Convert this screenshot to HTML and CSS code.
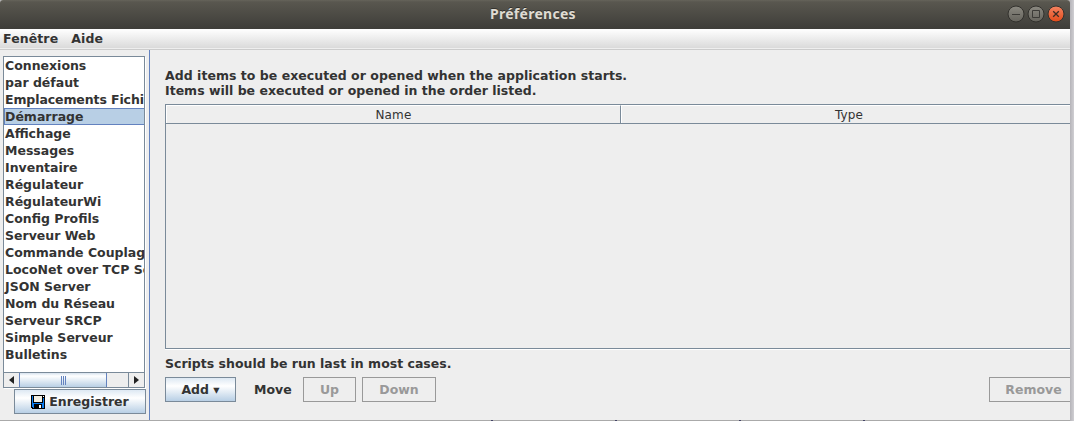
FILE: index.html
```html
<!DOCTYPE html>
<html lang="fr">
<head>
<meta charset="utf-8">
<title>Préférences</title>
<link rel="stylesheet" href="styles.css">
</head>
<body>
<div class="window">
  <header class="titlebar">
    <span class="title">Préférences</span>
    <div class="controls">
      <svg width="60" height="20" viewBox="0 0 60 20">
        <defs>
          <linearGradient id="grey" x1="0" y1="0" x2="0" y2="1"><stop offset="0" stop-color="#8b8981"/><stop offset="1" stop-color="#65635c"/></linearGradient>
          <linearGradient id="orange" x1="0" y1="0" x2="0" y2="1"><stop offset="0" stop-color="#f58462"/><stop offset="1" stop-color="#e14a19"/></linearGradient>
        </defs>
        <circle cx="10" cy="10" r="8" fill="url(#grey)" stroke="#32312d"/>
        <path d="M6 10.5h8" stroke="#3c3b37"/>
        <circle cx="30" cy="10" r="8" fill="url(#grey)" stroke="#32312d"/>
        <path d="M26.5 6.5h7v7h-7z" fill="none" stroke="#3c3b37"/>
        <circle cx="50" cy="10" r="8" fill="url(#orange)" stroke="#32312d"/>
        <path d="M47.2 7.2l5.6 5.6M52.8 7.2l-5.6 5.6" stroke="#3c2c24" stroke-width="1.3"/>
      </svg>
    </div>
  </header>
  <nav class="menubar"><span class="menu">Fenêtre</span><span class="menu">Aide</span></nav>
  <div class="body">
    <aside class="side">
      <div class="list">
        <ul class="items">
          <li>Connexions</li><li>par défaut</li><li class="tight">Emplacements Fichi</li><li class="selected">Démarrage</li><li>Affichage</li><li>Messages</li><li>Inventaire</li><li>Régulateur</li><li>RégulateurWi</li><li>Config Profils</li><li>Serveur Web</li><li>Commande Couplag</li><li>LocoNet over TCP Se</li><li>JSON Server</li><li>Nom du Réseau</li><li>Serveur SRCP</li><li>Simple Serveur</li><li>Bulletins</li>
        </ul>
        <div class="scrollbar">
          <svg class="arrow" width="15" height="14"><path d="M10 3v8L5 7z" fill="#222"/></svg>
          <div class="thumb"><i></i><i></i><i></i></div>
          <div class="track"></div>
          <svg class="arrow right" width="16" height="14"><path d="M5 3v8l5-4z" fill="#222"/></svg>
        </div>
      </div>
      <div class="button save">
        <svg width="14" height="14" viewBox="0 0 14 14" shape-rendering="crispEdges"><path d="M0 0h14v14H1L0 13z" fill="#000"/><path d="M1 1h1v7h10V3h1v10h-2V9H3v4H2l-1-1z" fill="#0a7cf0"/><path d="M3 1h8v6H3z" fill="#f1eee2"/><path d="M12 1h1v1h-1zM8 10h2v3H8z" fill="#fff"/></svg>
        <span>Enregistrer</span>
      </div>
    </aside>
    <main class="content">
      <p class="intro">Add items to be executed or opened when the application starts.</p>
      <p>Items will be executed or opened in the order listed.</p>
      <div class="table"><div class="thead"><div class="th name">Name</div><div class="th type">Type</div></div></div>
      <p class="hint">Scripts should be run last in most cases.</p>
      <div class="actions">
        <div class="button add"><span>Add ▾</span></div>
        <span class="move">Move</span>
        <div class="button disabled up"><span>Up</span></div>
        <div class="button disabled down"><span>Down</span></div>
        <div class="button disabled remove"><span>Remove</span></div>
      </div>
    </main>
  </div>
  <footer class="edge"><i></i><i></i><i></i><i></i></footer>
</div>
</body>
</html>
```
FILE: styles.css
```css
* { box-sizing: border-box; }
body { margin: 0; width: 1074px; height: 421px; overflow: hidden; background: linear-gradient(90deg, #b5b4b9 1070px, #d0cfd3 1074px); font: bold 12.5px/15px "DejaVu Sans", sans-serif; color: #333; }
.window { width: 1070px; height: 421px; display: flex; flex-direction: column; background: #eee; overflow: hidden; border-radius: 3px 3px 0 0; }
.titlebar { height: 29px; flex: none; display: grid; grid-template-columns: 490px 1fr 64px; background: linear-gradient(#66645a, #59574f 2px, #3e3d39); color: #dfdbd2; }
.title { grid-column: 2; font: bold 14px/28px "Noto Sans", sans-serif; letter-spacing: .27px; white-space: nowrap; text-shadow: 0 -1px #33322e; }
.controls { padding-top: 4px; height: 29px; }
.controls svg { display: block; }
.menubar { height: 21px; flex: none; display: flex; gap: 13px; padding: 2px 3px 0; letter-spacing: .1px; background: linear-gradient(#fff, #dadada 19px, #eee 19px, #eee 20px, #ccc 20px); }
.body { display: flex; height: 370px; flex: none; }
.side { width: 150px; flex: none; border-right: 1px solid #6382bf; padding: 6px 3px 0 3px; }
.list { width: 142px; height: 332px; border: 1px solid #7a8a99; background: #fff; box-shadow: 1px 1px #fff; overflow: hidden; }
.items { list-style: none; margin: 0; padding: 0; height: 315px; overflow: hidden; }
.items li { height: 17px; line-height: 17px; padding-left: 1px; white-space: nowrap; overflow: hidden; }
.items .tight { letter-spacing: -.1px; }
.items .selected { background: #b8cfe5; border: 1px solid #6382bf; border-width: 1px 0 1px 1px; padding-left: 0; line-height: 15px; }
.scrollbar { display: flex; height: 15px; border-top: 1px solid #7a8a99; background: #eee; }
.arrow { display: block; flex: none; }
.right { width: 16px; border-left: 1px solid #7a8a99; }
.thumb { width: 88px; border: 1px solid #6382bf; border-width: 0 1px; background: linear-gradient(#d6e2ee, #fff 3px, #b8cfe5); display: flex; justify-content: center; gap: 1px; padding-top: 3px; }
.thumb i { width: 1px; height: 9px; background: #6382bf; }
.track { flex: 1; }
.button { height: 25px; border: 1px solid #7a8a99; background: linear-gradient(#dde8f3, #fff 8px, #b8cfe5); display: flex; align-items: center; justify-content: center; white-space: nowrap; }
.save { margin: 1px 0 0 11px; width: 132px; gap: 4px; }
.content { flex: 1; padding: 18px 0 0 15px; min-width: 0; }
.content p { margin: 0; height: 15px; white-space: nowrap; }
.intro { letter-spacing: .035px; }
.table { height: 245px; margin-top: 6px; border: 1px solid #7a8a99; border-right: 0; box-shadow: 0 1px #fff; }
.thead { display: flex; height: 19px; border-bottom: 1px solid #7a8a99; font-weight: normal; font-size: 12px; line-height: 18px; letter-spacing: .15px; text-align: center; }
.th { border-top: 1px solid #fff; border-left: 1px solid #fff; }
.name { width: 455px; border-right: 1px solid #7a8a99; }
.type { flex: 1; padding-left: 6px; }
.content .hint { margin-top: 7px; }
.actions { display: flex; padding-top: 6px; align-items: center; }
.add { width: 71px; }
.move { width: 49px; margin-left: 18px; }
.disabled { border-color: #999; background: #eee; color: #999; }
.up { width: 53px; }
.down { width: 74px; margin-left: 6px; }
.remove { width: 81px; margin-left: auto; border-right: 0; padding-left: 7px; }
.edge { height: 1px; flex: none; background: #aaa; display: flex; gap: 122px; padding-left: 491px; }
.edge i { width: 2px; background: #446; }
```
